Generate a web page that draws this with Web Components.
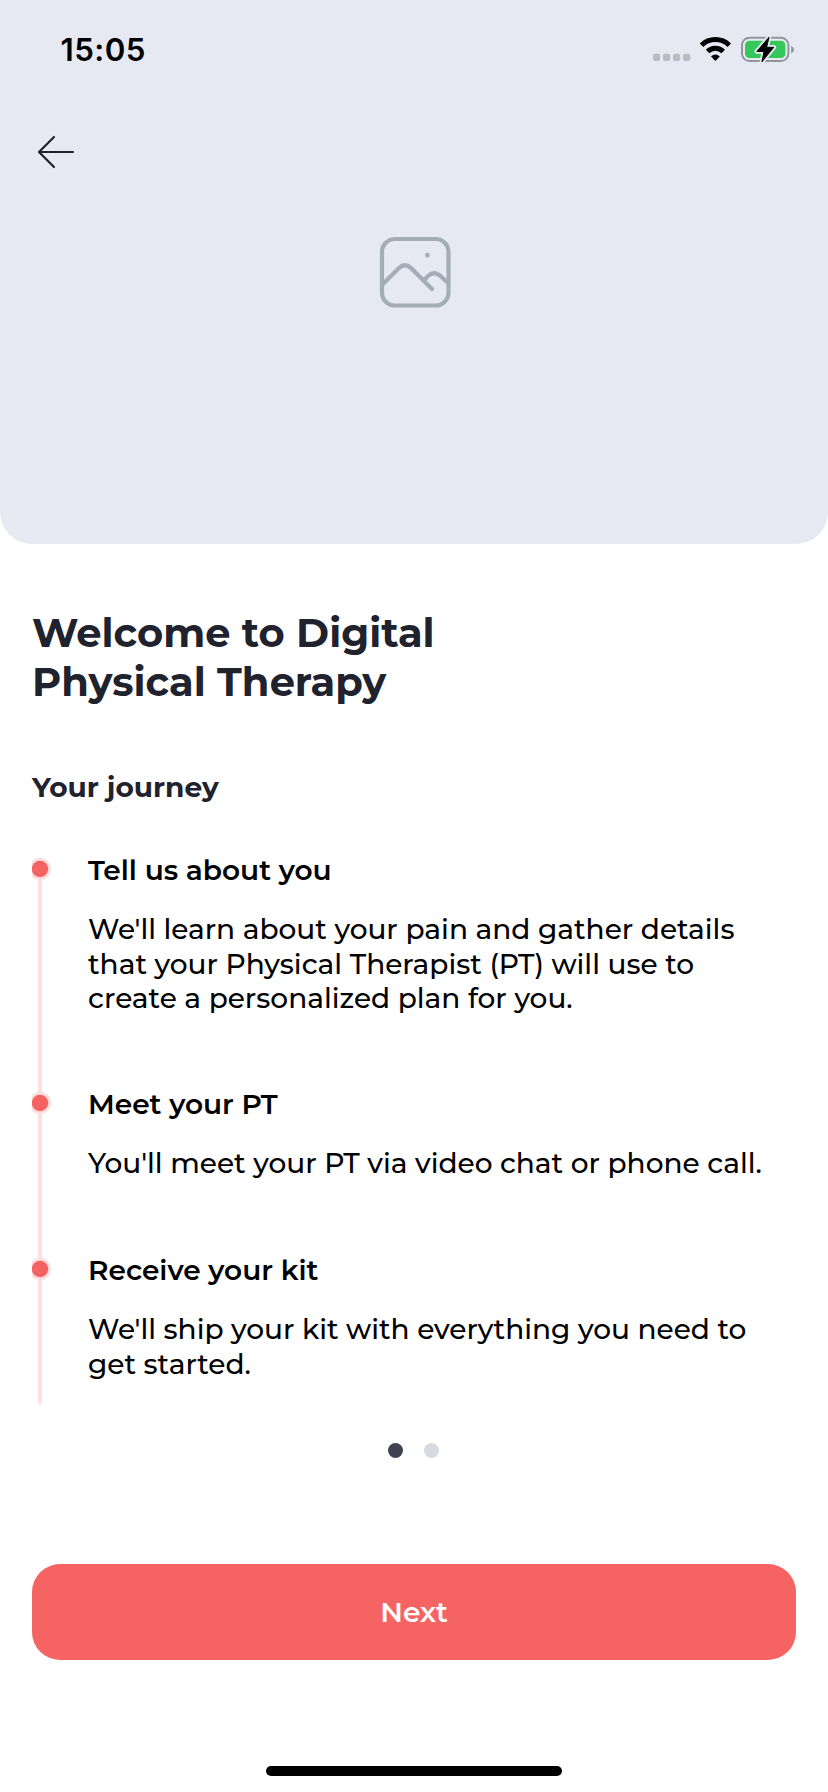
<!DOCTYPE html>
<html lang="en">
<head>
<meta charset="utf-8">
<title>Digital Physical Therapy</title>
<style>
html, body { margin: 0; background: #fff; }
body { font-family: Montserrat, Inter, "Liberation Sans", sans-serif; color: #000; }
</style>
</head>
<body>
<onboarding-screen>
  <hero-panel slot="hero"></hero-panel>
  <text-line slot="title">Welcome to Digital</text-line>
  <text-line slot="title">Physical Therapy</text-line>
  <text-line slot="subtitle">Your journey</text-line>
  <journey-step first>
    <text-line slot="heading">Tell us about you</text-line>
    <text-line>We'll learn about your pain and gather details</text-line>
    <text-line>that your Physical Therapist (PT) will use to</text-line>
    <text-line>create a personalized plan for you.</text-line>
  </journey-step>
  <journey-step>
    <text-line slot="heading">Meet your PT</text-line>
    <text-line>You'll meet your PT via video chat or phone call.</text-line>
  </journey-step>
  <journey-step last>
    <text-line slot="heading">Receive your kit</text-line>
    <text-line>We'll ship your kit with everything you need to</text-line>
    <text-line>get started.</text-line>
  </journey-step>
  <page-dots slot="footer"></page-dots>
  <primary-button slot="footer">Next</primary-button>
  <home-indicator slot="footer"></home-indicator>
</onboarding-screen>

<script>
function define(name, markup) {
  const template = document.createElement('template');
  template.innerHTML = markup;
  customElements.define(name, class extends HTMLElement {
    constructor() {
      super();
      this.attachShadow({ mode: 'open' }).append(template.content.cloneNode(true));
    }
  });
}

define('text-line', `
<style>
  :host { display: block; white-space: nowrap; }
</style><slot></slot>`);

define('status-bar', `
<style>
  :host { display: flex; justify-content: space-between; align-items: flex-start; height: 100px; padding: 0 28px 0 60.5px; box-sizing: border-box; }
  time { font: 600 31.3px/38px Inter, sans-serif; margin-top: 31px; letter-spacing: 0.45px; }
  svg { display: block; margin-top: 34px; }
</style>
<time>15:05</time>
<svg width="150" height="30" viewBox="0 0 150 30">
  <g fill="#b9bbc1"><rect x="3" y="19.8" width="7.2" height="7.2" rx="2"/><rect x="13" y="19.8" width="7.2" height="7.2" rx="2"/><rect x="23" y="19.8" width="7.2" height="7.2" rx="2"/><rect x="33" y="19.8" width="7.2" height="7.2" rx="2"/></g>
  <g fill="none" stroke="#000" stroke-width="5">
    <path d="M51.5 11.2A20 20 0 0 1 79.3 11.2"/>
    <path d="M57.6 17.6A11 11 0 0 1 73.2 17.6"/>
  </g>
  <path d="M61 22.5Q65.4 18.7 69.8 22.5L65.4 27Z"/>
  <rect x="92" y="3.7" width="46.4" height="23.4" rx="7.5" fill="none" stroke="#93959d" stroke-width="2"/>
  <rect x="95" y="6.8" width="40.4" height="17.3" rx="4.5" fill="#34c759"/>
  <path d="M141.2 11.7Q144 13 144 15.6T141.2 19.5Z" fill="#93959d"/>
  <path d="M119 3.2L106.8 17.4H114L111.9 27.8L123.8 13.3H116.6Z" stroke="#e6e9f2" stroke-width="4.6" stroke-linejoin="round"/>
  <path d="M119 3.2L106.8 17.4H114L111.9 27.8L123.8 13.3H116.6Z" stroke="#000" stroke-width="1" stroke-linejoin="round"/>
</svg>`);

define('hero-panel', `
<style>
  :host { display: flex; flex-direction: column; height: 544px; background: #e6e9f2; border-radius: 0 0 32px 32px; }
  .back { margin: 32px 0 0 32px; width: 48px; height: 40px; }
  .picture { align-self: center; margin: 64px 0 0 2px; width: 72px; height: 72px; }
  svg { display: block; fill: none; stroke-linecap: round; stroke-linejoin: round; }
</style>
<status-bar></status-bar>
<svg class="back" viewBox="0 0 48 40" stroke="#20222c" stroke-width="2.2"><path d="M41 20H7M22 5L7 20L22 35"/></svg>
<svg class="picture" viewBox="0 0 72 72" stroke="#a6abb8" stroke-width="4.2">
  <rect x="3" y="3" width="66.5" height="66.5" rx="13"/>
  <path d="M4 48L20 32Q26 26.5 32 32L53 53M45 44L49 40Q55 34.8 61 39.5L69 47"/>
  <circle cx="48.4" cy="19.2" r="2.4" fill="#a6abb8" stroke="none"/>
</svg>`);

define('journey-step', `
<style>
  :host { display: grid; grid-template-columns: 24px 1fr; column-gap: 32px; height: 166px; }
  :host([first]) { height: 234px; }
  :host([last]) { height: 151px; }
  .rail { display: block; width: 24px; height: 100%; overflow: hidden; }
  :host([first]) .line { transform: translateY(16px); }
  .heading { font: 600 28px/34px Montserrat, Inter, sans-serif; margin-bottom: 25px; }
  .body { font: 500 28px/34.5px Montserrat, Inter, sans-serif; }
</style>
<svg class="rail"><rect class="line" x="6" y="0" width="4" height="100%" fill="#fcdfdf"/><circle cx="8" cy="16" r="11" fill="#fcdcdc"/><circle cx="8" cy="16" r="8.2" fill="#f56262"/></svg>
<div><div class="heading"><slot name="heading"></slot></div><div class="body"><slot></slot></div></div>`);

define('page-dots', `
<style>
  :host { display: flex; justify-content: center; gap: 21px; margin: 39px 1px 0 0; }
  i { width: 15px; height: 15px; border-radius: 50%; background: #d7dae3; }
  .on { background: #3f4350; }
</style><i class="on"></i><i></i>`);

define('primary-button', `
<style>
  :host { display: block; margin: 106px 32px 0; }
  button { display: block; width: 100%; height: 96px; padding: 0 0 1px; border: 0; border-radius: 28px; background: #f66363; color: #fff; font: 600 28px/34px Montserrat, Inter, sans-serif; }
</style><button type="button"><slot></slot></button>`);

define('home-indicator', `
<style>
  :host { display: block; width: 296px; height: 10px; margin: 106px auto 0; border-radius: 5px; background: #000; }
</style>`);

define('onboarding-screen', `
<style>
  :host { display: flex; flex-direction: column; width: 828px; height: 1792px; overflow: hidden; background: #fff; }
  main { padding: 64px 32px 0; }
  h1, h2 { margin: 0; color: #20222d; font-weight: 700; }
  h1 { font-size: 40px; line-height: 49px; height: 98px; }
  h2 { font-size: 28px; line-height: 34px; margin: 64px 0 49px; }
</style>
<slot name="hero"></slot>
<main><h1><slot name="title"></slot></h1><h2><slot name="subtitle"></slot></h2><slot></slot></main>
<slot name="footer"></slot>`);
</script>
</body>
</html>
